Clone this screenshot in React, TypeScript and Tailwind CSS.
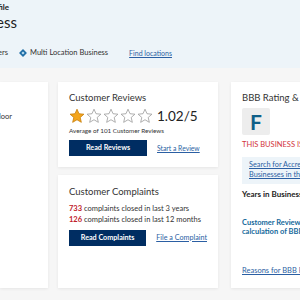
import React from "react";

function Star({ filled }: { filled?: boolean }) {
  return (
    <svg width="16" height="16" viewBox="0 0 24 24" className="shrink-0">
      <polygon
        points="12,1.8 15,8.6 22.4,9.3 16.8,14.2 18.5,21.5 12,17.6 5.5,21.5 7.2,14.2 1.6,9.3 9,8.6"
        fill={filled ? "#f4a51c" : "#ffffff"}
        stroke={filled ? "#c77d0a" : "#9a9a9a"}
        strokeWidth="1.2"
        strokeLinejoin="round"
      />
    </svg>
  );
}

function Diamond() {
  return (
    <svg width="8" height="8" viewBox="0 0 10 10" className="shrink-0">
      <rect x="1.5" y="1.5" width="7" height="7" transform="rotate(45 5 5)" fill="#1f6ea6" />
      <rect x="3.6" y="3.6" width="2.8" height="2.8" transform="rotate(45 5 5)" fill="#bfe0f2" />
    </svg>
  );
}

// fragment of text whose right edge is pinned; overflow spills off the left edge
function Tail({ w, children, className }: { w: string; children: React.ReactNode; className?: string }) {
  return (
    <div className={`flex justify-end whitespace-nowrap shrink-0 ${w} ${className ?? ""}`}>
      <span>{children}</span>
    </div>
  );
}

export default function App() {
  return (
    <div className="w-[300px] h-[300px] overflow-hidden bg-[#f6f6f6] text-[#222] font-['Lato',sans-serif]">
      <header className="h-[68px] bg-[#edf4f9] pt-[2px]">
        <Tail w="w-[9px]" className="text-[8px] font-bold leading-[10px] text-[#222]">
          Business Profile
        </Tail>
        <Tail w="w-[17px]" className="text-[15px] leading-[18px] mt-[1px]">
          Acme Home Services Business
        </Tail>
        <div className="flex items-center mt-[17px] text-[7.5px] leading-[10px] text-[#333]">
          <Tail w="w-[8px]">Home Builders</Tail>
          <div className="ml-[11px] flex items-center gap-[3px]">
            <Diamond />
            <span className="whitespace-nowrap">Multi Location Business</span>
          </div>
          <a className="ml-[21px] text-[7px] whitespace-nowrap underline text-[#2b5fa3]">Find locations</a>
        </div>
      </header>

      <main className="flex pt-[14px] h-[220px]">
        <section className="w-[48px] h-[206px] shrink-0 bg-white shadow-[0_1px_3px_rgba(0,0,0,0.07)] pt-[30px]">
          <Tail w="w-[12px]" className="text-[7.5px] leading-[10px] text-[#333]">
            4500 Main Street, 2nd Floor
          </Tail>
        </section>

        <div className="ml-[10px] w-[160px] shrink-0 flex flex-col gap-[8px]">
          <section className="h-[85px] bg-white shadow-[0_1px_3px_rgba(0,0,0,0.07)] px-[11px] pt-[10px]">
            <h2 className="text-[9.5px] leading-[12px] text-[#333] whitespace-nowrap">Customer Reviews</h2>
            <div className="flex items-center gap-[1px] mt-[3px]">
              <Star filled />
              <Star />
              <Star />
              <Star />
              <Star />
              <span className="ml-[3px] text-[13.5px] leading-[18px] text-[#222]">1.02/5</span>
            </div>
            <p className="text-[6.3px] leading-[8px] mt-[2px] text-[#333] whitespace-nowrap">
              Average of 101 Customer Reviews
            </p>
            <div className="flex items-center mt-[5px]">
              <button className="w-[78px] h-[16px] bg-[#002d62] text-white text-[7.2px] font-bold">Read Reviews</button>
              <a className="ml-[10px] text-[6.8px] underline text-[#2b5fa3] whitespace-nowrap">Start a Review</a>
            </div>
          </section>

          <section className="flex-1 bg-white shadow-[0_1px_3px_rgba(0,0,0,0.07)] px-[11px] pt-[11px]">
            <h2 className="text-[9.5px] leading-[12px] text-[#333] whitespace-nowrap">Customer Complaints</h2>
            <div className="mt-[5px] text-[7.5px] leading-[11px] text-[#333] whitespace-nowrap">
              <p>
                <span className="font-bold text-[#c0202a]">733</span> complaints closed in last 3 years
              </p>
              <p>
                <span className="font-bold text-[#c0202a]">126</span> complaints closed in last 12 months
              </p>
            </div>
            <div className="flex items-center mt-[5px]">
              <button className="w-[78px] h-[16px] bg-[#002d62] text-white text-[7.2px] font-bold">Read Complaints</button>
              <a className="ml-[10px] text-[7.2px] underline text-[#2b5fa3] whitespace-nowrap">File a Complaint</a>
            </div>
          </section>
        </div>

        <section className="ml-[13px] w-[120px] h-[206px] shrink-0 bg-white shadow-[0_1px_3px_rgba(0,0,0,0.07)] pl-[11px] pt-[10px] whitespace-nowrap">
          <h2 className="text-[9.5px] leading-[12px] text-[#333]">BBB Rating &amp; Accreditation</h2>
          <div className="mt-[4px] w-[28px] h-[27px] rounded-[2px] bg-[#ededed] flex items-center justify-center">
            <span className="text-[21px] font-bold leading-none text-[#0f5f88]">F</span>
          </div>
          <p className="mt-[5px] text-[7.5px] leading-[9px] uppercase text-[#d2343c]">This business is not BBB accredited</p>
          <div className="mt-[8px] h-[27px] bg-[#edf4f9] px-[7px] pt-[3px] text-[7.3px] leading-[10px]">
            <a className="underline text-[#2b5fa3]">
              Search for Accredited
              <br />
              Businesses in this Category
            </a>
          </div>
          <p className="mt-[6px] text-[8px] leading-[9px] font-bold text-[#222]">Years in Business: 25</p>
          <p className="mt-[19px] text-[7.5px] leading-[9px] font-bold text-[#13689b]">
            Customer Reviews are not used in the
            <br />
            calculation of BBB Rating
          </p>
          <a className="block mt-[30px] text-[7.5px] leading-[9px] underline text-[#2b5fa3]">Reasons for BBB Rating</a>
        </section>
      </main>
    </div>
  );
}
